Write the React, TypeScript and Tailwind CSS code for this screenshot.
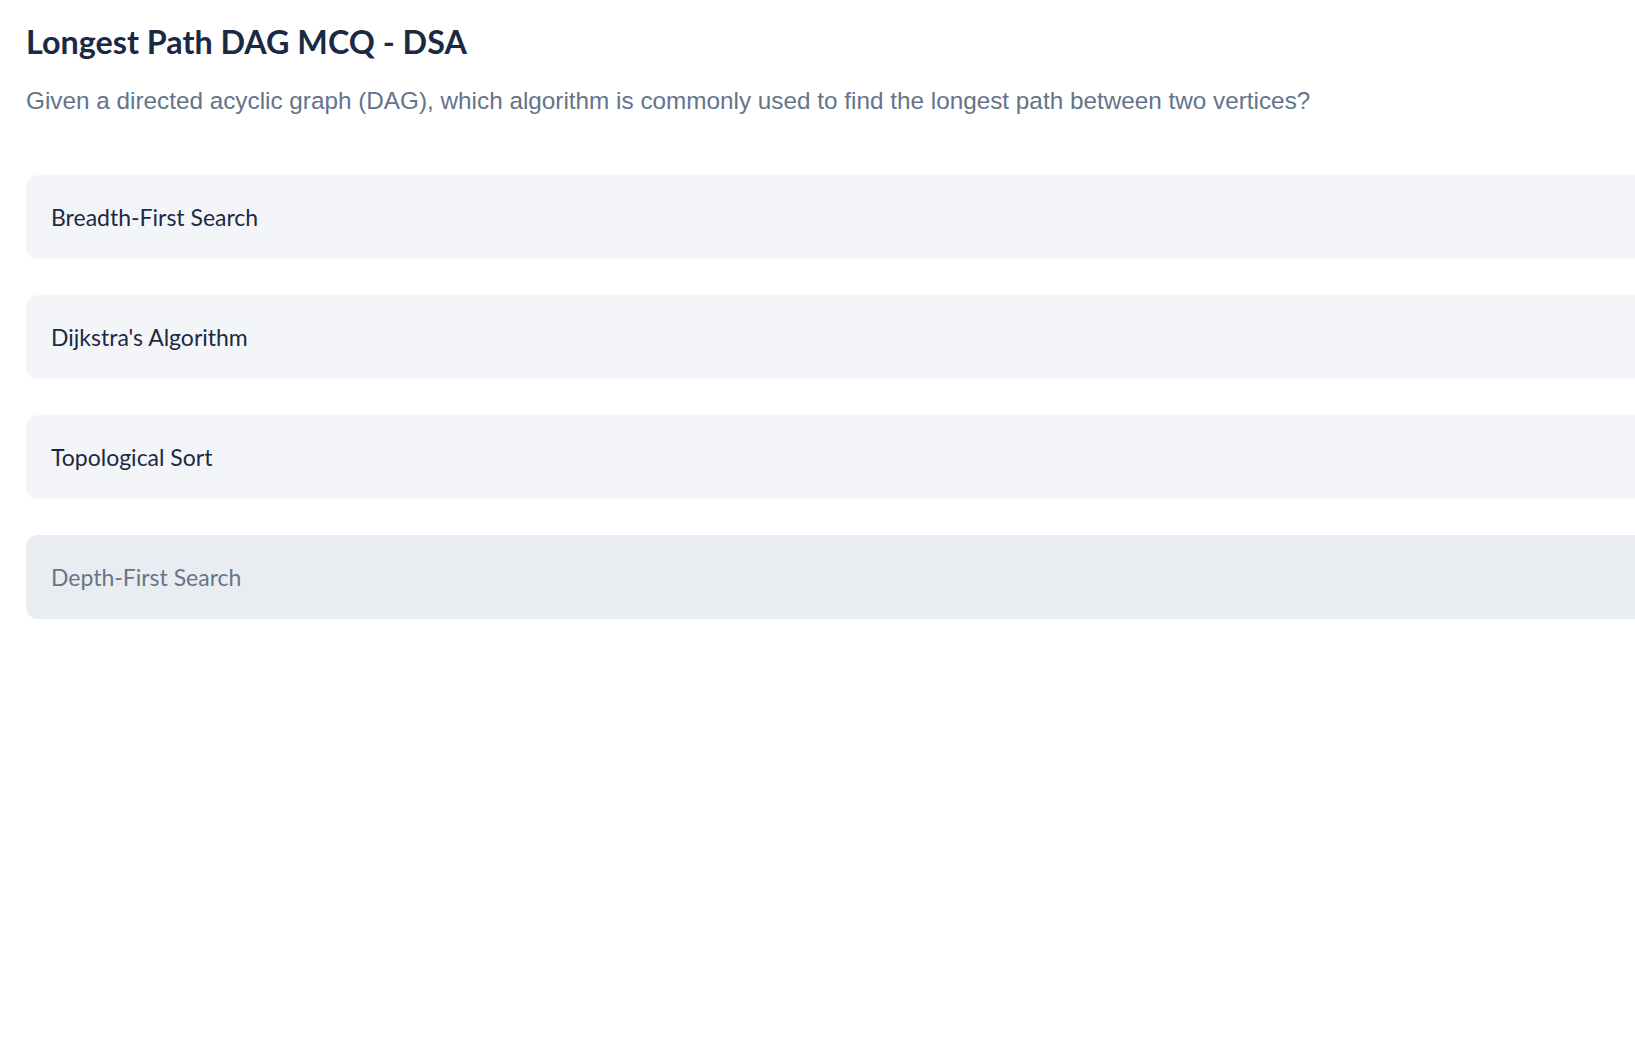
const OPTIONS = [
  { label: "Breadth-First Search", muted: false },
  { label: "Dijkstra's Algorithm", muted: false },
  { label: "Topological Sort", muted: false },
  { label: "Depth-First Search", muted: true },
];

export default function App() {
  return (
    <div className="w-full min-h-screen overflow-hidden bg-white">
      <div className="w-[1700px] pl-[26px] pt-[23px]">
        <h1 className="font-['Lato',sans-serif] text-[32.3px] leading-[1.2] font-bold text-[#1b2a44]">
          Longest Path DAG MCQ - DSA
        </h1>
        <p className="mt-[24px] font-['Liberation_Sans',Arial,sans-serif] text-[24.3px] leading-[1.2] text-[#64748b]">
          Given a directed acyclic graph (DAG), which algorithm is commonly used to find the longest path between two vertices?
        </p>

        {/* options */}
        <div className="mt-[60px] flex flex-col gap-[36px]">
          {OPTIONS.map((opt) => (
            <div
              key={opt.label}
              className={`h-[84px] flex items-center px-[25px] rounded-[12px] font-['Lato',sans-serif] text-[23px] ${
                opt.muted ? "bg-[#e9edf1] text-[#66758c]" : "bg-[#f3f5f9] text-[#1b2a44]"
              }`}
            >
              {opt.label}
            </div>
          ))}
        </div>
      </div>
    </div>
  );
}
